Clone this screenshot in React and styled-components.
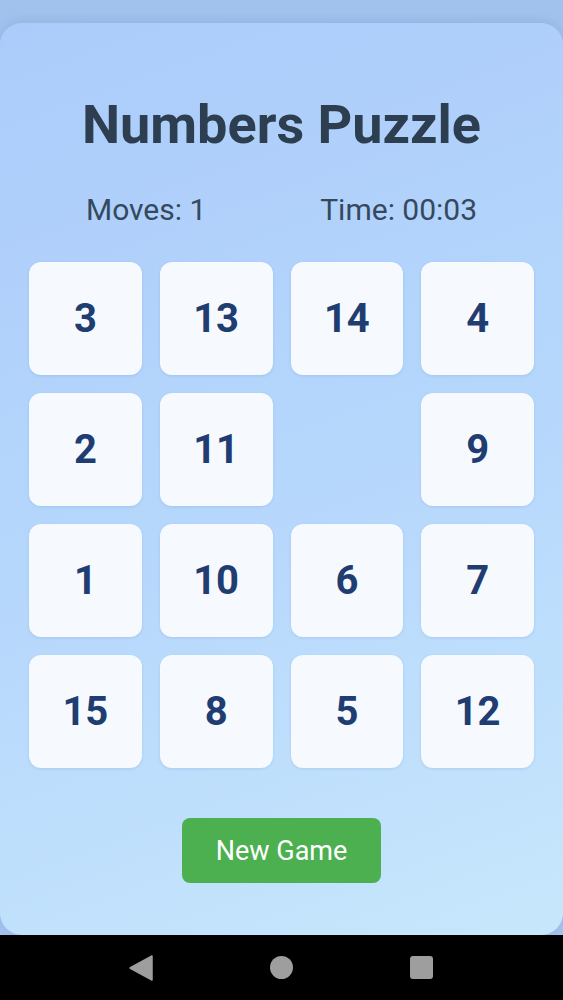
import styled, { createGlobalStyle } from "styled-components"

const GlobalStyle = createGlobalStyle`
    html, body {
        margin: 0;
        padding: 0;
        background-color: #a2c2ee;
        font-family: Roboto, "Noto Sans", sans-serif;
    }
    * { box-sizing: border-box; }
`

const tiles = [3, 13, 14, 4, 2, 11, 0, 9, 1, 10, 6, 7, 15, 8, 5, 12]

function BackIcon() {
    return (
        <svg width="24" height="26" viewBox="0 0 24 26">
            <path d="M23 1 L23 25 L1 13 Z" fill="#9e9e9e" strokeLinejoin="round" stroke="#9e9e9e" strokeWidth="1.5" />
        </svg>
    )
}

export default function App() {
    return (
        <Screen>
            <GlobalStyle />
            <Card>
                <Title>Numbers Puzzle</Title>
                <Stats>
                    <span>Moves: 1</span>
                    <span>Time: 00:03</span>
                </Stats>
                <Board>
                    {tiles.map((n, i) => (
                        <Tile key={i} $empty={n === 0}>{n !== 0 ? n : ""}</Tile>
                    ))}
                </Board>
                <NewGameButton>New Game</NewGameButton>
            </Card>
            <NavBar>
                <BackIcon />
                <HomeDot />
                <RecentSquare />
            </NavBar>
        </Screen>
    )
}

const Screen = styled.div`
    height: 1000px;
    display: flex;
    flex-direction: column;
    padding-top: 23px;
    overflow: hidden;
`

const Card = styled.div`
    flex: 1;
    display: flex;
    flex-direction: column;
    align-items: center;
    padding: 69px 29px 0;
    border-radius: 22px;
    background: linear-gradient(160deg, #abcbfa 0%, #b7d8fc 55%, #c7e7fc 100%);
    box-shadow: 0 -3px 10px rgba(60, 90, 140, 0.12);
`

const Title = styled.h1`
    margin: 0;
    font-size: 54px;
    line-height: 65px;
    font-weight: 700;
    color: #2c3e50;
`

const Stats = styled.div`
    width: 100%;
    display: flex;
    justify-content: space-around;
    margin-top: 36px;
    font-size: 30px;
    line-height: 34px;
    color: #34495e;
`

const Board = styled.div`
    width: 100%;
    margin-top: 35px;
    display: grid;
    grid-template-columns: repeat(4, 1fr);
    grid-auto-rows: 113px;
    gap: 18px;
`

const Tile = styled.div`
    display: flex;
    align-items: center;
    justify-content: center;
    border-radius: 12px;
    background-color: ${(p) => (p.$empty ? "transparent" : "#f6faff")};
    box-shadow: ${(p) => (p.$empty ? "none" : "0 1px 3px rgba(40, 80, 140, 0.12)")};
    font-size: 40px;
    font-weight: 700;
    color: #1f3d70;
`

const NewGameButton = styled.button`
    margin-top: 50px;
    width: 199px;
    height: 65px;
    border: none;
    border-radius: 8px;
    background-color: #4caf50;
    color: #ffffff;
    font-family: Roboto, sans-serif;
    font-size: 27px;
`

const NavBar = styled.div`
    height: 65px;
    flex-shrink: 0;
    background-color: #000000;
    display: flex;
    align-items: center;
    justify-content: space-around;
    padding: 0 72px 0 70px;
`

const HomeDot = styled.div`
    width: 23px;
    height: 23px;
    border-radius: 50%;
    background-color: #9e9e9e;
`

const RecentSquare = styled.div`
    width: 23px;
    height: 23px;
    border-radius: 3px;
    background-color: #9e9e9e;
`
